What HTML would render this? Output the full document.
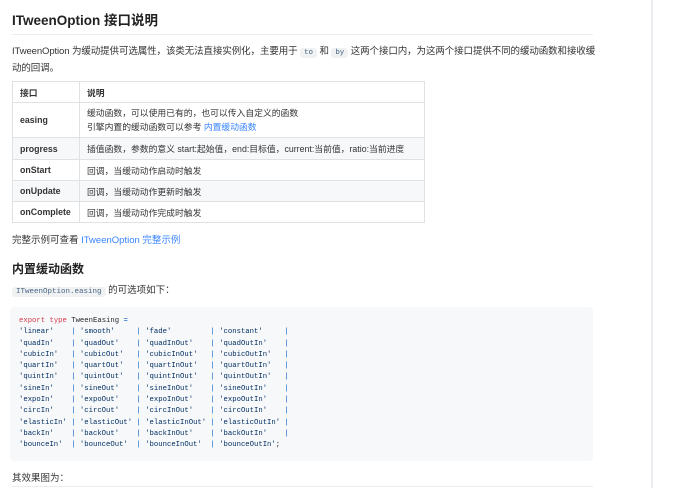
<!DOCTYPE html>
<html><head><meta charset="utf-8"><style>
*{margin:0;padding:0;box-sizing:border-box}
body{width:690px;height:488px;overflow:hidden;background:#fff;font-family:"Liberation Sans","Noto Sans CJK SC",sans-serif;color:#2c3e50;position:relative}
.vl{position:absolute;left:651px;top:0;width:2px;height:488px;background:#eaecef}
.c{position:absolute;left:12px;width:585px}
h1{position:absolute;left:12px;top:11px;font-size:13.5px;font-weight:bold;color:#222;line-height:20px}
.hr{position:absolute;left:12px;top:34px;width:581px;height:1px;background:#eaecef}
p{font-size:9.5px;line-height:15px;color:#333}
code{font-family:"Liberation Mono",monospace;font-size:7.5px;background:#f0f1f3;border-radius:3px;padding:1px 4px;color:#476582}
table{position:absolute;left:12px;top:81px;border-collapse:collapse;font-size:8.8px;color:#333;table-layout:fixed;width:413px}
td,th{border:1px solid #dfe2e5;padding:0 7px;text-align:left;vertical-align:middle;white-space:nowrap}
th{font-weight:bold;height:21px}
td:first-child,th:first-child{font-weight:bold;width:67px}
tr.s{background:#f6f8fa}
a{color:#3884ff;text-decoration:none}
h3{position:absolute;left:12px;top:260px;font-size:12px;font-weight:bold;color:#222}
pre{position:absolute;left:10px;top:307px;width:583px;height:154px;background:#f6f8fa;border-radius:4px;padding:9px 9px;font-family:"Liberation Mono",monospace;font-size:7.25px;line-height:11.3px;color:#032f62}
.k{color:#d73a49}.t{color:#24292e}.p{color:#005cc5}
</style></head><body>
<div class="vl"></div>
<h1>ITweenOption 接口说明</h1>
<div class="hr"></div>
<p class="c" style="top:44px;letter-spacing:-0.1px">ITweenOption 为缓动提供可选属性，该类无法直接实例化，主要用于 <code>to</code> 和 <code>by</code> 这两个接口内，为这两个接口提供不同的缓动函数和接收缓动的回调。</p>
<table>
<tr><th>接口</th><th>说明</th></tr>
<tr><td style="height:35px">easing</td><td style="line-height:14px">缓动函数，可以使用已有的，也可以传入自定义的函数<br>引擎内置的缓动函数可以参考 <a>内置缓动函数</a></td></tr>
<tr class="s"><td style="height:22px">progress</td><td>插值函数，参数的意义 start:起始值，end:目标值，current:当前值，ratio:当前进度</td></tr>
<tr><td style="height:21px">onStart</td><td>回调，当缓动动作启动时触发</td></tr>
<tr class="s"><td style="height:21px">onUpdate</td><td>回调，当缓动动作更新时触发</td></tr>
<tr><td style="height:21px">onComplete</td><td>回调，当缓动动作完成时触发</td></tr>
</table>
<p class="c" style="top:233px">完整示例可查看 <a>ITweenOption 完整示例</a></p>
<h3>内置缓动函数</h3>
<p class="c" style="top:283px"><code>ITweenOption.easing</code> 的可选项如下：</p>
<pre><span class="k">export</span> <span class="k">type</span> <span class="t">TweenEasing</span> <span class="p">=</span>
'linear'    <span class="p">|</span> 'smooth'     <span class="p">|</span> 'fade'         <span class="p">|</span> 'constant'     <span class="p">|</span>
'quadIn'    <span class="p">|</span> 'quadOut'    <span class="p">|</span> 'quadInOut'    <span class="p">|</span> 'quadOutIn'    <span class="p">|</span>
'cubicIn'   <span class="p">|</span> 'cubicOut'   <span class="p">|</span> 'cubicInOut'   <span class="p">|</span> 'cubicOutIn'   <span class="p">|</span>
'quartIn'   <span class="p">|</span> 'quartOut'   <span class="p">|</span> 'quartInOut'   <span class="p">|</span> 'quartOutIn'   <span class="p">|</span>
'quintIn'   <span class="p">|</span> 'quintOut'   <span class="p">|</span> 'quintInOut'   <span class="p">|</span> 'quintOutIn'   <span class="p">|</span>
'sineIn'    <span class="p">|</span> 'sineOut'    <span class="p">|</span> 'sineInOut'    <span class="p">|</span> 'sineOutIn'    <span class="p">|</span>
'expoIn'    <span class="p">|</span> 'expoOut'    <span class="p">|</span> 'expoInOut'    <span class="p">|</span> 'expoOutIn'    <span class="p">|</span>
'circIn'    <span class="p">|</span> 'circOut'    <span class="p">|</span> 'circInOut'    <span class="p">|</span> 'circOutIn'    <span class="p">|</span>
'elasticIn' <span class="p">|</span> 'elasticOut' <span class="p">|</span> 'elasticInOut' <span class="p">|</span> 'elasticOutIn' <span class="p">|</span>
'backIn'    <span class="p">|</span> 'backOut'    <span class="p">|</span> 'backInOut'    <span class="p">|</span> 'backOutIn'    <span class="p">|</span>
'bounceIn'  <span class="p">|</span> 'bounceOut'  <span class="p">|</span> 'bounceInOut'  <span class="p">|</span> 'bounceOutIn'<span class="t">;</span></pre>
<p class="c" style="top:471px">其效果图为：</p>
<div style="position:absolute;left:12px;top:486px;width:581px;height:1px;background:#eaecef"></div>
</body></html>
